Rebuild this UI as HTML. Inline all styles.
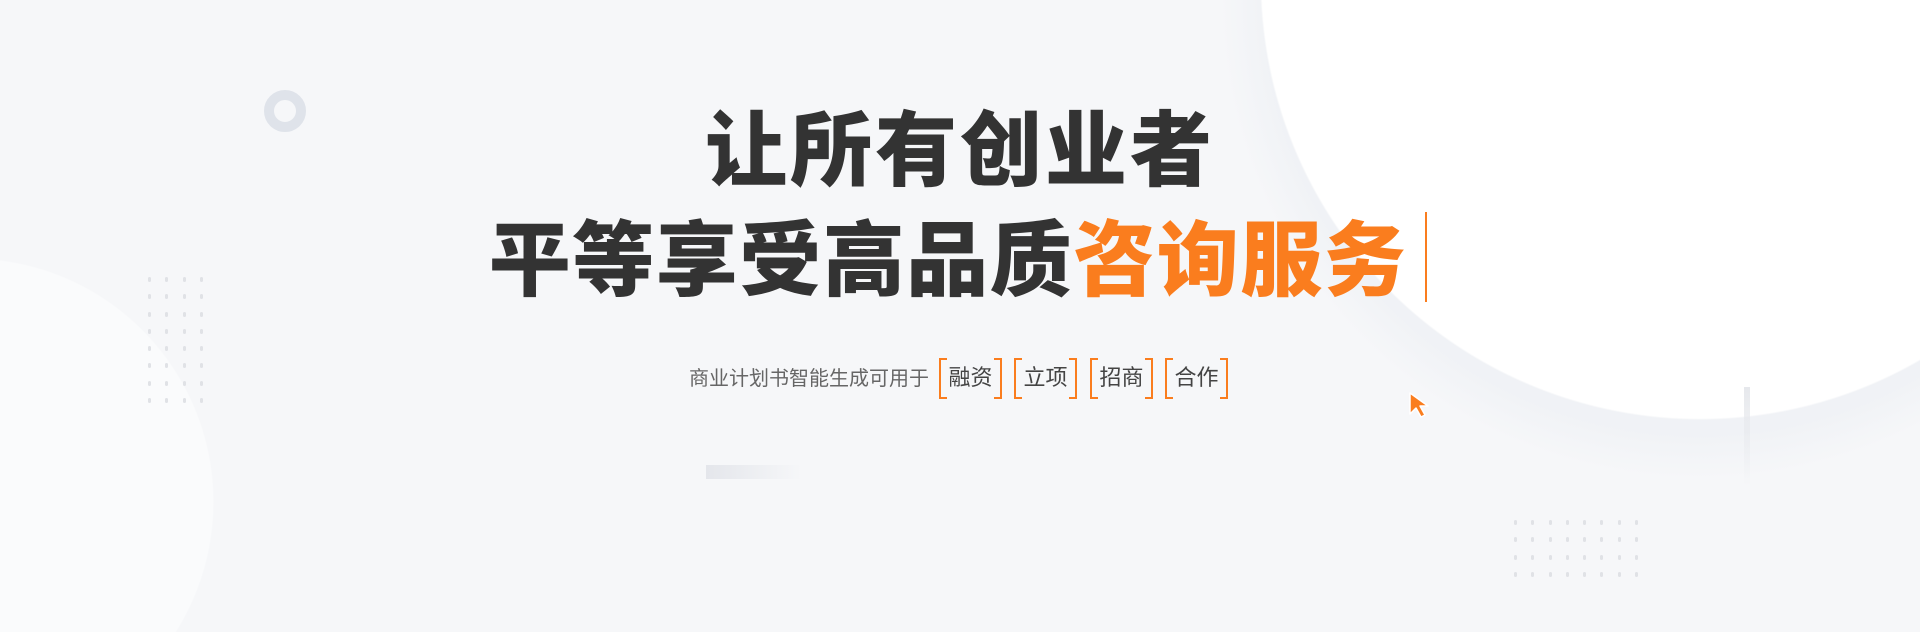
<!DOCTYPE html>
<html><head><meta charset="utf-8"><style>
*{margin:0;padding:0;box-sizing:border-box}
html,body{width:1920px;height:632px;overflow:hidden;background:#f6f7f9}
#w{position:relative;width:1920px;height:632px;overflow:hidden;font-family:"Liberation Sans","Noto Sans CJK SC",sans-serif;
background:
radial-gradient(circle 440px at 1700px -20px,#fff 99.6%,rgba(255,255,255,0) 100%),
radial-gradient(circle 480px at 1700px 0px,rgba(235,238,243,.55) 90%,rgba(246,247,249,0) 100%),
radial-gradient(circle 244px at -30px 502px,#fafbfc 99.5%,rgba(250,251,252,0) 100%),
#f6f7f9}
.ring{position:absolute;left:264px;top:90px;width:42px;height:42px;border-radius:50%;border:10px solid #dfe3ea}
.dots{position:absolute;display:grid;gap:0}
.dots i{display:block;width:3px;height:5px;background:#e0e2e6;border-radius:2px}
.t{position:absolute;left:0;width:1920px;text-align:center;color:#333;font-family:"Noto Sans CJK SC",sans-serif;font-weight:900;font-size:82px;line-height:100px}
.o{color:#fa7d1e}
.bar{position:absolute;left:1425px;top:212px;width:2px;height:90px;background:#fa7d1e}
.sub{position:absolute;left:689px;top:358px;height:37px;display:flex;align-items:center;font-size:20px;color:#666;font-family:"Noto Sans CJK SC",sans-serif}
.tag{position:absolute;top:358px;width:63px;height:37px;font-size:22px;color:#444;text-align:center;line-height:37px;font-family:"Noto Sans CJK SC",sans-serif}
.tag:before,.tag:after{content:"";position:absolute;top:0;width:6px;height:37px;border:2px solid #fa7d1e}
.tag:before{left:0;border-right:none}
.tag:after{right:0;border-left:none}
.gb{position:absolute;left:706px;top:465px;width:96px;height:14px;background:linear-gradient(90deg,#e4e6eb,rgba(240,242,245,0))}
.vl{position:absolute;left:1744px;top:387px;width:6px;height:100px;background:linear-gradient(#e6e8ec,rgba(240,242,245,0))}
</style></head><body><div id="w">
<div class="ring"></div>
<div class="dots" style="left:148px;top:277px;grid-template-columns:repeat(4,17.3px);grid-auto-rows:17.3px">
<i></i><i></i><i></i><i></i><i></i><i></i><i></i><i></i><i></i><i></i><i></i><i></i><i></i><i></i><i></i><i></i><i></i><i></i><i></i><i></i><i></i><i></i><i></i><i></i><i></i><i></i><i></i><i></i><i></i><i></i><i></i><i></i>
</div>
<div class="dots" style="left:1514px;top:520px;grid-template-columns:repeat(8,17.3px);grid-auto-rows:17.3px">
<i></i><i></i><i></i><i></i><i></i><i></i><i></i><i></i><i></i><i></i><i></i><i></i><i></i><i></i><i></i><i></i><i></i><i></i><i></i><i></i><i></i><i></i><i></i><i></i><i></i><i></i><i></i><i></i><i></i><i></i><i></i><i></i>
</div>
<div class="t" style="top:94px;letter-spacing:3px">让所有创业者</div>
<div class="t" style="top:204px;letter-spacing:1.5px;left:-12px">平等享受高品质<span class="o">咨询服务</span></div>
<div class="bar"></div>
<div class="sub">商业计划书智能生成可用于</div>
<div class="tag" style="left:939px">融资</div>
<div class="tag" style="left:1014px">立项</div>
<div class="tag" style="left:1090px">招商</div>
<div class="tag" style="left:1165px">合作</div>
<div class="gb"></div>
<div class="vl"></div>
<svg style="position:absolute;left:1408px;top:391px" width="24" height="28" viewBox="0 0 24 28"><path d="M2 2 L2 23 L8 17 L13 26 L17 24 L12 15 L20 15 Z" fill="#fa7d1e" stroke="#fff" stroke-width="1.5" stroke-linejoin="round"/></svg>
</div></body></html>
